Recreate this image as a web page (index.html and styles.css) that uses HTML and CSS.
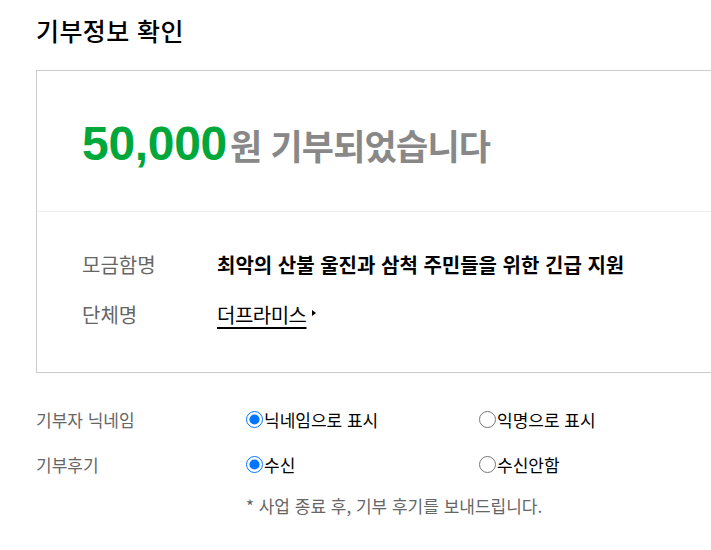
FILE: index.html
```html
<!DOCTYPE html>
<html lang="ko">
<head>
<meta charset="utf-8">
<title>기부정보 확인</title>
<link rel="stylesheet" href="styles.css">
</head>
<body>
<main class="page">
  <h1 class="title">기부정보 확인</h1>
  <section class="box">
    <div class="amount-area">
      <p class="amount"><span class="num">50,000</span><span class="won">원 기부되었습니다</span></p>
    </div>
    <div class="info-area">
      <div class="info-row">
        <span class="info-label">모금함명</span>
        <span class="info-value strong">최악의 산불 울진과 삼척 주민들을 위한 긴급 지원</span>
      </div>
      <div class="info-row">
        <span class="info-label">단체명</span>
        <a class="org-link" href="#">더프라미스</a><span class="tri"></span>
      </div>
    </div>
  </section>
  <section class="options">
    <div class="opt-row">
      <span class="opt-label">기부자 닉네임</span>
      <label class="opt"><input type="radio" name="nick" checked>닉네임으로 표시</label>
      <label class="opt"><input type="radio" name="nick">익명으로 표시</label>
    </div>
    <div class="opt-row">
      <span class="opt-label">기부후기</span>
      <label class="opt"><input type="radio" name="review" checked>수신</label>
      <label class="opt"><input type="radio" name="review">수신안함</label>
    </div>
    <p class="note">* 사업 종료 후, 기부 후기를 보내드립니다.</p>
  </section>
</main>
</body>
</html>
```

FILE: styles.css
```css
html, body {
  margin: 0;
  padding: 0;
  overflow: hidden;
  background: #fff;
}
body {
  font-family: "Noto Sans CJK KR", "Noto Sans", sans-serif;
  color: #000;
}
.page {
  padding: 13px 0 0 36px;
  width: 760px;
}
.title {
  margin: 0;
  font-size: 25px;
  font-weight: 500;
  line-height: 34px;
  height: 57px;
  letter-spacing: 0.4px;
}
.box {
  border: 1px solid #cccccc;
  width: 740px;
}
.amount-area {
  height: 140px;
  display: flex;
  align-items: center;
  padding-left: 45px;
  border-bottom: 1px solid #eeeeee;
}
.amount {
  margin: 4px 0 0;
  display: flex;
  align-items: baseline;
}
.num {
  font-family: "Liberation Sans", Arial, sans-serif;
  font-weight: 700;
  font-size: 48px;
  color: #00a83c;
  letter-spacing: -0.3px;
}
.won {
  font-weight: 700;
  font-size: 35px;
  color: #888888;
  margin-left: 3px;
  letter-spacing: -0.8px;
}
.info-area {
  height: 160px;
  padding: 27px 45px 0;
  box-sizing: border-box;
}
.info-row {
  display: flex;
  align-items: center;
  height: 50px;
}
.info-label {
  width: 135px;
  font-size: 20px;
  color: #666666;
}
.info-value.strong {
  font-size: 20px;
  font-weight: 700;
  color: #000;
  letter-spacing: 0;
}
.org-link {
  font-size: 20px;
  color: #000;
  text-decoration: underline;
  text-decoration-thickness: 2px;
  text-underline-offset: 4px;
  letter-spacing: -0.5px;
}
.tri {
  display: inline-block;
  width: 0;
  height: 0;
  border-top: 3px solid transparent;
  border-bottom: 3px solid transparent;
  border-left: 4px solid #000;
  margin-left: 5px;
  margin-top: -2px;
}
.options {
  padding-top: 24px;
}
.opt-row {
  display: flex;
  align-items: center;
  height: 45px;
}
.opt-label {
  width: 210px;
  font-size: 17px;
  color: #666666;
}
.opt {
  width: 233px;
  display: flex;
  align-items: center;
  font-size: 17px;
  color: #000;
}
.opt input {
  width: 17px;
  height: 17px;
  margin: 0 1px 0 0;
  accent-color: #0075ff;
}
.note {
  margin: 6px 0 0 210px;
  font-size: 17px;
  color: #666666;
}
```
